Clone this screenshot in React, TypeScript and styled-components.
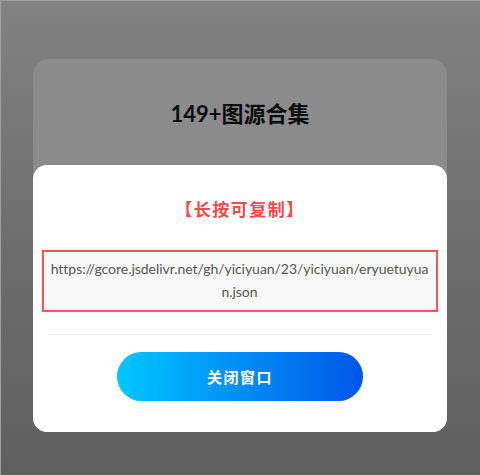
import styled, { createGlobalStyle } from "styled-components";

const GlobalStyle = createGlobalStyle`
  html, body {
    margin: 0;
    padding: 0;
  }
  body {
    font-family: "Lato", "Noto Sans CJK SC", sans-serif;
  }
`;

const Backdrop = styled.div`
  width: 480px;
  height: 475px;
  box-sizing: border-box;
  padding-top: 59px;
  background: linear-gradient(180deg, #828282 0%, #6e6e6e 50%, #5f5f5f 100%);
  box-shadow: inset 1px 1px 0 #a0a0a0;
  overflow: hidden;
`;

const Card = styled.div`
  width: 414px;
  margin-left: 33px;
  background: #8b8b8b;
  border-radius: 15px;
`;

const Title = styled.h1`
  height: 106px;
  margin: 0;
  display: flex;
  align-items: center;
  justify-content: center;
  color: #0c0c0c;
  font-size: 22px;
  font-weight: 700;
`;

const Sheet = styled.div`
  height: 267px;
  display: flex;
  flex-direction: column;
  align-items: center;
  background: #fff;
  border-radius: 14px;
`;

const Notice = styled.p`
  margin: 33px 0 0;
  height: 24px;
  line-height: 24px;
  color: #ee4b4b;
  font-size: 17px;
  font-weight: 700;
  letter-spacing: 1.5px;
`;

const LinkBox = styled.div`
  width: 396px;
  height: 62px;
  margin: 28px 1px 0 0;
  box-sizing: border-box;
  padding: 5px 6px 0;
  border: 2px solid #ea5a5c;
  background: #f8f8f8;
  box-shadow: 0 0 1px #f5a5a5, 0 -3px 0 #f9f9f9;
  color: #555;
  font-size: 14px;
  line-height: 23px;
  letter-spacing: -0.04px;
  text-align: center;
  word-break: break-all;
`;

const Divider = styled.hr`
  width: 384px;
  height: 1px;
  margin: 22px 0 0;
  border: 0;
  background: #eeeeee;
`;

const CloseButton = styled.button`
  width: 246px;
  height: 49px;
  margin-top: 17px;
  padding: 0;
  border: 0;
  border-radius: 25px;
  background: linear-gradient(90deg, #00c6ff 0%, #0056e8 100%);
  color: #fff;
  font-family: inherit;
  font-size: 15px;
  font-weight: 700;
  letter-spacing: 1.5px;
`;

export default function App() {
  return (
    <>
      <GlobalStyle />
      <Backdrop>
        <Card>
          <Title>149+图源合集</Title>
          <Sheet>
            <Notice>【长按可复制】</Notice>
            <LinkBox>https://gcore.jsdelivr.net/gh/yiciyuan/23/yiciyuan/eryuetuyuan.json</LinkBox>
            <Divider />
            <CloseButton>关闭窗口</CloseButton>
          </Sheet>
        </Card>
      </Backdrop>
    </>
  );
}
